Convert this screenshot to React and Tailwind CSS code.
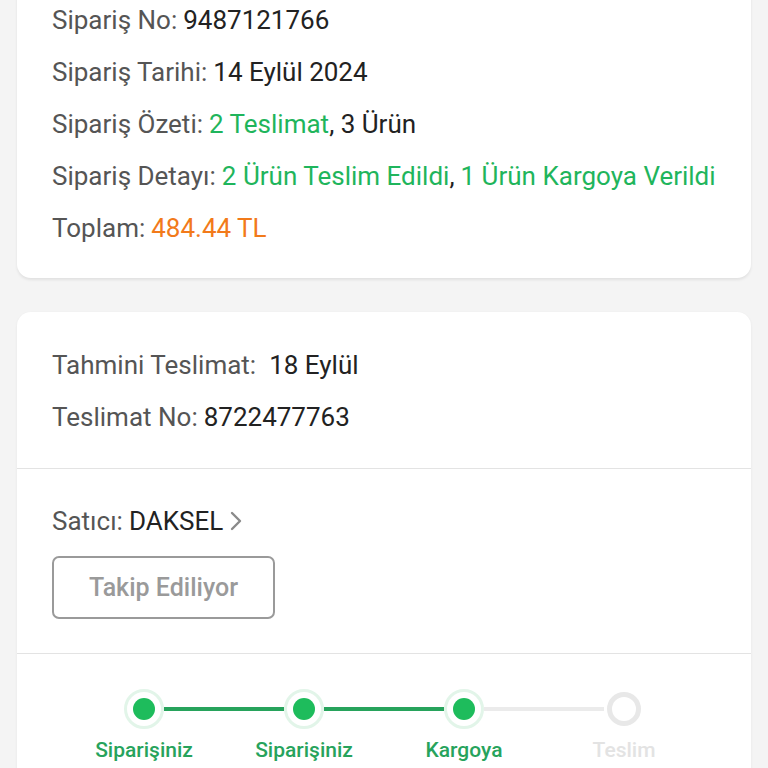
import React from "react";

function Row({ children }) {
  return <div className="h-[52px] flex items-center whitespace-nowrap">{children}</div>;
}

function Step({ label, line2, state, first, last, leftDone, rightDone }) {
  return (
    <div className="flex flex-col items-center">
      <div className="w-full flex items-center h-[44px]">
        <div className={`flex-1 h-[4px] ${first ? "bg-transparent" : leftDone ? "bg-[#27a35c]" : "bg-[#ebebeb]"}`} />
        {state === "done" ? (
          <div className="w-[40px] h-[40px] rounded-full border-[3px] border-[#e2f5e9] bg-white flex items-center justify-center">
            <div className="w-[22px] h-[22px] rounded-full bg-[#1ebc5c]" />
          </div>
        ) : (
          <div className="w-[40px] h-[40px] flex items-center justify-center">
            <div className="w-[34px] h-[34px] rounded-full border-[5px] border-[#e8e8e8] bg-white" />
          </div>
        )}
        <div className={`flex-1 h-[4px] ${last ? "bg-transparent" : rightDone ? "bg-[#27a35c]" : "bg-[#ebebeb]"}`} />
      </div>
      <div
        className={`mt-[6px] text-[21px] leading-[26px] font-medium text-center ${
          state === "done" ? "text-[#27a35c]" : "text-[#e3e3e3]"
        }`}
      >
        <div>{label}</div>
        <div>{line2}</div>
      </div>
    </div>
  );
}

export default function App() {
  return (
    <div
      className="w-[768px] h-[768px] overflow-hidden bg-[#f4f4f4] text-[26px]"
      style={{ fontFamily: "Roboto, 'Noto Sans', sans-serif" }}
    >
      <div className="mx-[17px] -mt-[6px] bg-white rounded-b-[14px] shadow-[0_2px_3px_rgba(0,0,0,0.08)] px-[35px] pb-[24px]">
        <Row>
          <span className="text-[#555]">Sipariş No:</span>
          <span className="text-[#222] ml-[6px]">9487121766</span>
        </Row>
        <Row>
          <span className="text-[#555]">Sipariş Tarihi:</span>
          <span className="text-[#222] ml-[6px]">14 Eylül 2024</span>
        </Row>
        <Row>
          <span className="text-[#555]">Sipariş Özeti:</span>
          <span className="text-[#1fb55c] ml-[6px]">2 Teslimat</span>
          <span className="text-[#222]">, 3 Ürün</span>
        </Row>
        <Row>
          <span className="text-[#555]">Sipariş Detayı:</span>
          <span className="text-[#1fb55c] ml-[6px]">2 Ürün Teslim Edildi</span>
          <span className="text-[#222]">,</span>
          <span className="text-[#1fb55c] ml-[6px]">1 Ürün Kargoya Verildi</span>
        </Row>
        <Row>
          <span className="text-[#555]">Toplam:</span>
          <span className="text-[#f27a1a] ml-[6px]">484.44 TL</span>
        </Row>
      </div>

      <div className="mx-[17px] mt-[34px] bg-white rounded-t-[14px] shadow-[0_1px_3px_rgba(0,0,0,0.06)]">
        <div className="px-[35px] pt-[27px] pb-[25px]">
          <Row>
            <span className="text-[#555]">Tahmini Teslimat:</span>
            <span className="text-[#222] ml-[13px]">18 Eylül</span>
          </Row>
          <Row>
            <span className="text-[#555]">Teslimat No:</span>
            <span className="text-[#222] ml-[6px]">8722477763</span>
          </Row>
        </div>
        <div className="h-px bg-[#e3e3e3]" />
        <div className="px-[35px] pt-[37px] pb-[34px]">
          <div className="h-[30px] flex items-center whitespace-nowrap">
            <span className="text-[#555]">Satıcı:</span>
            <span className="text-[#222] ml-[6px]">DAKSEL</span>
            <svg width="14" height="20" viewBox="0 0 14 20" className="ml-[6px]">
              <path d="M3 2 L11 10 L3 18" fill="none" stroke="#8a8a8a" strokeWidth="2.4" strokeLinecap="round" strokeLinejoin="round" />
            </svg>
          </div>
          <div className="mt-[20px] w-[223px] h-[63px] border-2 border-[#9a9a9a] rounded-[7px] flex items-center justify-center">
            <span className="text-[25px] font-medium text-[#9a9a9a]">Takip Ediliyor</span>
          </div>
        </div>
        <div className="h-px bg-[#e3e3e3]" />
        <div className="px-[47px] pt-[33px] grid grid-cols-4">
          <Step label="Siparişiniz" line2="Alındı" state="done" first rightDone />
          <Step label="Siparişiniz" line2="Hazırlandı" state="done" leftDone rightDone />
          <Step label="Kargoya" line2="Verildi" state="done" leftDone />
          <Step label="Teslim" line2="Edildi" state="todo" last />
        </div>
      </div>
    </div>
  );
}
